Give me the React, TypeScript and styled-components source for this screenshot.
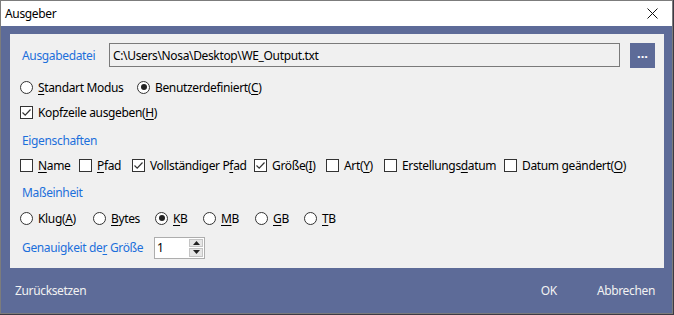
import React from "react";
import styled, { createGlobalStyle } from "styled-components";

const Global = createGlobalStyle`
  html, body { margin: 0; padding: 0; }
  body {
    width: 674px; height: 315px; overflow: hidden;
    background: #3c3a44;
    font-family: "Noto Sans", "Open Sans", sans-serif;
    font-size: 12px;
    letter-spacing: -0.35px;
    color: #000;
  }
`;

const Window = styled.div`
  width: 671px;
  height: 312px;
  border: 1px solid #7c7c7c;
  background: #5d6b98;
  display: flex;
  flex-direction: column;
`;

const TitleBar = styled.div`
  height: 25px;
  background: #fff;
  display: flex;
  align-items: center;
  justify-content: space-between;
  padding: 0 0 0 4px;
`;

const Title = styled.span`
  font-size: 12px;
  color: #000;
`;

const CloseBtn = styled.button`
  width: 44px;
  height: 25px;
  border: 0;
  background: transparent;
  display: flex;
  align-items: center;
  justify-content: center;
  padding: 0 0 0 4px;
`;

const Panel = styled.div`
  margin: 8px 8px 0 9px;
  background: #f0f0f0;
  padding: 9px 9px 10px 10px;
  display: flex;
  flex-direction: column;
`;

const Row = styled.div<{ $mt?: number; $h?: number }>`
  display: flex;
  align-items: center;
  height: ${(p) => p.$h ?? 20}px;
  margin-top: ${(p) => p.$mt ?? 0}px;
`;

const LinkLabel = styled.span<{ $w?: number }>`
  color: #1c6fdb;
  padding-left: 2px;
  width: ${(p) => (p.$w ? `${p.$w}px` : "auto")};
  flex: none;
`;

const PathInput = styled.div`
  width: 508px;
  height: 22px;
  border: 1px solid #7a7a7a;
  background: #f0f0f0;
  display: flex;
  align-items: center;
  padding-left: 3px;
  box-sizing: content-box;
`;

const BrowseBtn = styled.button`
  margin-left: 10px;
  width: 25px;
  height: 25px;
  border: 0;
  background: #5d6b98;
  color: #fff;
  font-weight: bold;
  font-size: 13px;
  letter-spacing: 0;
  line-height: 1;
  padding: 0 0 4px;
  display: flex;
  align-items: center;
  justify-content: center;
  font-family: inherit;
`;

const Option = styled.label<{ $w: number }>`
  width: ${(p) => p.$w}px;
  flex: none;
  display: flex;
  align-items: center;
  gap: 5px;
  white-space: nowrap;
`;

const Radio = styled.span<{ $on?: boolean }>`
  width: 11px;
  height: 11px;
  border: 1px solid #333;
  border-radius: 50%;
  background: #fff;
  flex: none;
  display: flex;
  align-items: center;
  justify-content: center;
  &::after {
    content: "";
    display: ${(p) => (p.$on ? "block" : "none")};
    width: 6px;
    height: 6px;
    border-radius: 50%;
    background: #222;
  }
`;

const Box = styled.span`
  width: 11px;
  height: 11px;
  border: 1px solid #333;
  background: #fff;
  flex: none;
  display: flex;
  align-items: center;
  justify-content: center;
`;

const U = styled.u`
  text-decoration-thickness: 1px;
  text-underline-offset: 2px;
`;

const Spin = styled.div`
  margin-left: 1px;
  width: 49px;
  height: 20px;
  border: 1px solid #adadad;
  background: #fff;
  display: flex;
  align-items: stretch;
`;

const SpinValue = styled.span`
  flex: 1;
  padding-left: 2px;
  display: flex;
  align-items: center;
`;

const SpinBtns = styled.div`
  width: 14px;
  margin: 1px 1px 1px 0;
  display: flex;
  flex-direction: column;
  gap: 1px;
`;

const SpinBtn = styled.span`
  flex: 1;
  background: #e6e6e6;
  border: 1px solid #c4c4c4;
  display: flex;
  align-items: center;
  justify-content: center;
`;

const Footer = styled.div`
  flex: 1;
  display: flex;
  align-items: center;
  padding: 0 0 0 14px;
  color: #f2f2f2;
`;

const FooterBtn = styled.span<{ $ml?: string }>`
  margin-left: ${(p) => p.$ml ?? "0"};
`;

const Check = () => (
  <svg width="11" height="11" viewBox="0 0 11 11">
    <path d="M1.5 5.5 L4.2 8.2 L9.5 2.5" fill="none" stroke="#333" strokeWidth="1.2" />
  </svg>
);

const CheckOpt = ({ w, on, children }: { w: number; on?: boolean; children: React.ReactNode }) => (
  <Option $w={w}>
    <Box>{on && <Check />}</Box>
    <span>{children}</span>
  </Option>
);

const RadioOpt = ({ w, on, children }: { w: number; on?: boolean; children: React.ReactNode }) => (
  <Option $w={w}>
    <Radio $on={on} />
    <span>{children}</span>
  </Option>
);

const Arrow = ({ up }: { up?: boolean }) => (
  <svg width="7" height="4" viewBox="0 0 7 4">
    <path d={up ? "M0 4 L3.5 0 L7 4 Z" : "M0 0 L3.5 4 L7 0 Z"} fill="#222" />
  </svg>
);

export default function App() {
  return (
    <>
      <Global />
      <Window>
        <TitleBar>
          <Title>Ausgeber</Title>
          <CloseBtn aria-label="Schließen">
            <svg width="11" height="11" viewBox="0 0 11 11">
              <path d="M0.5 0.5 L10.5 10.5 M10.5 0.5 L0.5 10.5" stroke="#111" strokeWidth="1" />
            </svg>
          </CloseBtn>
        </TitleBar>
        <Panel>
          <Row $h={24}>
            <LinkLabel $w={87}>Ausgabedatei</LinkLabel>
            <PathInput>C:\Users\Nosa\Desktop\WE_Output.txt</PathInput>
            <BrowseBtn>...</BrowseBtn>
          </Row>
          <Row $mt={10}>
            <RadioOpt w={117}>
              <U>S</U>tandart Modus
            </RadioOpt>
            <RadioOpt w={200} on>
              Benutzerdefiniert(<U>C</U>)
            </RadioOpt>
          </Row>
          <Row $mt={5}>
            <CheckOpt w={200} on>
              Kopfzeile ausgeben(<U>H</U>)
            </CheckOpt>
          </Row>
          <Row $mt={8}>
            <LinkLabel>Eigenschaften</LinkLabel>
          </Row>
          <Row $mt={5}>
            <CheckOpt w={59}>
              <U>N</U>ame
            </CheckOpt>
            <CheckOpt w={53}>
              <U>P</U>fad
            </CheckOpt>
            <CheckOpt w={122} on>
              Vollständiger P<U>f</U>ad
            </CheckOpt>
            <CheckOpt w={72} on>
              Größe(<U>I</U>)
            </CheckOpt>
            <CheckOpt w={58}>
              Art(<U>Y</U>)
            </CheckOpt>
            <CheckOpt w={120}>
              Erstellungs<U>d</U>atum
            </CheckOpt>
            <CheckOpt w={125}>
              Datum geändert(<U>O</U>)
            </CheckOpt>
          </Row>
          <Row $mt={7}>
            <LinkLabel>Maßeinheit</LinkLabel>
          </Row>
          <Row $mt={6}>
            <RadioOpt w={73}>
              Klug(<U>A</U>)
            </RadioOpt>
            <RadioOpt w={62}>
              <U>B</U>ytes
            </RadioOpt>
            <RadioOpt w={48} on>
              <U>K</U>B
            </RadioOpt>
            <RadioOpt w={52}>
              <U>M</U>B
            </RadioOpt>
            <RadioOpt w={49}>
              <U>G</U>B
            </RadioOpt>
            <RadioOpt w={40}>
              <U>T</U>B
            </RadioOpt>
          </Row>
          <Row $mt={9} $h={21}>
            <LinkLabel $w={131}>
              Genauigkeit de<U>r</U> Größe
            </LinkLabel>
            <Spin>
              <SpinValue>1</SpinValue>
              <SpinBtns>
                <SpinBtn>
                  <Arrow up />
                </SpinBtn>
                <SpinBtn>
                  <Arrow />
                </SpinBtn>
              </SpinBtns>
            </Spin>
          </Row>
        </Panel>
        <Footer>
          <FooterBtn>Zurücksetzen</FooterBtn>
          <FooterBtn $ml="auto">OK</FooterBtn>
          <FooterBtn $ml="40px">Abbrechen</FooterBtn>
          <FooterBtn $ml="17px" />
        </Footer>
      </Window>
    </>
  );
}
